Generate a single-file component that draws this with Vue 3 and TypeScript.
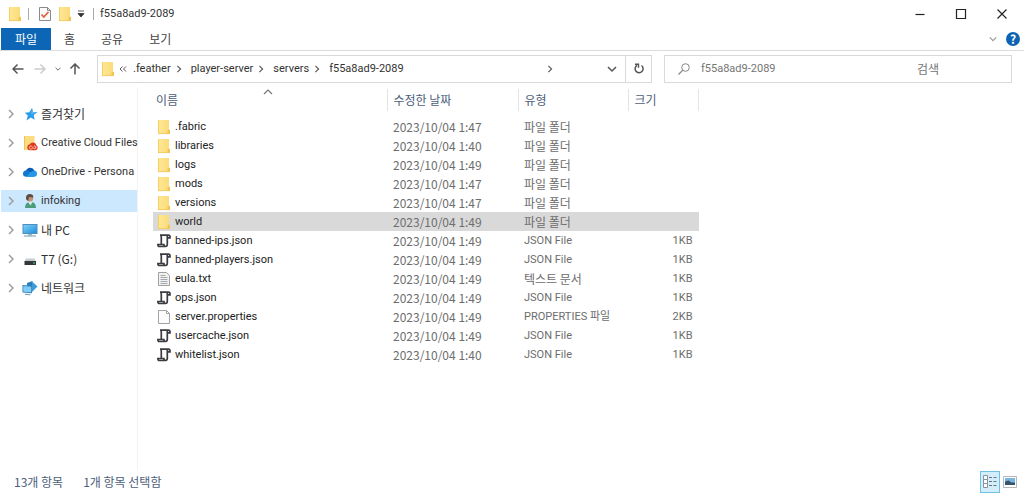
<script setup lang="ts">
import { ref } from 'vue'

type IconKind = 'folder' | 'script' | 'text' | 'blank'

interface FileEntry {
  name: string
  icon: IconKind
  modified: string
  type: string
  size: string
}

interface Place {
  label: string
  icon: string
}

const folderName = 'f55a8ad9-2089'
const tabs: string[] = ['파일', '홈', '공유', '보기']
const crumbs: string[] = ['.feather', 'player-server', 'servers', folderName]

const places: Place[] = [
  { label: '즐겨찾기', icon: 'star' },
  { label: 'Creative Cloud Files', icon: 'creative' },
  { label: 'OneDrive - Persona', icon: 'cloud' },
  { label: 'infoking', icon: 'user' },
  { label: '내 PC', icon: 'pc' },
  { label: 'T7 (G:)', icon: 'drive' },
  { label: '네트워크', icon: 'network' },
]

const folder = (name: string, time: string): FileEntry => ({
  name,
  icon: 'folder',
  modified: `2023/10/04 ${time}`,
  type: '파일 폴더',
  size: '',
})
const file = (name: string, time: string, icon: IconKind = 'script', type = 'JSON File', size = '1KB'): FileEntry => ({
  name,
  icon,
  modified: `2023/10/04 ${time}`,
  type,
  size,
})

const entries: FileEntry[] = [
  folder('.fabric', '1:47'),
  folder('libraries', '1:40'),
  folder('logs', '1:49'),
  folder('mods', '1:47'),
  folder('versions', '1:47'),
  folder('world', '1:49'),
  file('banned-ips.json', '1:49'),
  file('banned-players.json', '1:49'),
  file('eula.txt', '1:49', 'text', '텍스트 문서'),
  file('ops.json', '1:49'),
  file('server.properties', '1:49', 'blank', 'PROPERTIES 파일', '2KB'),
  file('usercache.json', '1:49'),
  file('whitelist.json', '1:40'),
]

const isLatin = (text: string): boolean => /^[A-Za-z.]{2}/.test(text)

const selected = ref('world')
const activePlace = ref('infoking')
const query = ref('')
</script>

<template>
  <div class="explorer">
    <svg class="defs" width="0" height="0" aria-hidden="true">
      <defs>
        <linearGradient id="g-folder" x1="0" y1="0" x2="1" y2="0">
          <stop offset="0" stop-color="#ffe795" />
          <stop offset="1" stop-color="#fbdb78" />
        </linearGradient>
        <linearGradient id="g-screen" x1="0" y1="0" x2="1" y2="1">
          <stop offset="0" stop-color="#7fd0f8" />
          <stop offset="1" stop-color="#1f8fdc" />
        </linearGradient>
        <symbol id="i-folder" viewBox="0 0 14 16">
          <path d="M1 1h11v9.500l1 1V15H1z" fill="url(#g-folder)" />
          <path d="M1 1h1v14H1z" fill="#f6d063" />
          <path d="M10.500 11.500l1.500-1 1 1V15h-2.500z" fill="#f0c653" />
          <path d="M1 14.300h12v.8H1z" fill="#efc85c" />
        </symbol>
        <symbol id="i-script" viewBox="0 0 14 16">
          <path d="M4.300 11V4q0-1.800-1.300-1.800h8.500q1.500 0 1.500 1.800v.8h-2.500M10.300 3v8.300q0 2.200-1.800 2.200H2.300Q.9 13.500.9 11.500h6q0 2 1.600 2" fill="none" stroke="#3b3b40" stroke-width="1.700" />
        </symbol>
        <symbol id="i-text" viewBox="0 0 14 16">
          <path d="M1.500 1.500h8l3 3v10h-11z" fill="#f1f1f1" stroke="#a0a0a0" />
          <path d="M3.500 4.500h5M3.500 6.500h7M3.500 8.500h7M3.500 10.500h7M3.500 12.500h7" stroke="#a6a9ac" />
        </symbol>
        <symbol id="i-blank" viewBox="0 0 14 16">
          <path d="M1.500 1.500h8l3 3v10h-11z" fill="#fdfdfd" stroke="#a3a3a3" />
          <path d="M9.500 1.500v3h3" fill="none" stroke="#a3a3a3" />
        </symbol>
        <symbol id="i-star" viewBox="0 0 16 16">
          <path d="M10 2l1 4 4.500.3-3.800 2.700 1 4.800-3.900-2.400-4.300 3 1.300-4.900-3-2.700 4.500-.6z" fill="#2a9cea" />
          <path d="M10 2l1 4 4.500.3-6.500 2z" fill="#58b8f5" />
        </symbol>
        <symbol id="i-creative" viewBox="0 0 16 16">
          <path d="M2 1h10.500v14H2z" fill="#fbdc80" />
          <path d="M2 1h1v14H2z" fill="#efc455" />
          <path d="M5.200 12.200a3 3 0 0 1 2.500-3 3.700 3.700 0 0 1 6.800 1.400 2.500 2.500 0 0 1-.8 4.600H8a3 3 0 0 1-2.800-3z" fill="#dc3b22" />
          <path d="M10.700 13l-1.200.9a1.500 1.500 0 1 1 0-2.700c1.300.4 1.500 2.700 3.300 2.400a1.300 1.300 0 1 0-1-2.300" fill="none" stroke="#ffd6b5" stroke-width=".9" />
        </symbol>
        <symbol id="i-cloud" viewBox="0 0 16 16">
          <path d="M4 7a4.500 4.500 0 0 1 8.400-.5L9 11z" fill="#0b5cb0" />
          <path d="M3.800 6.500a3.500 3.500 0 0 1 3 .6l5.500 5.700H3.500a3.200 3.200 0 0 1 .3-6.300z" fill="#1277cf" />
          <path d="M7.500 8.500l3-1.500a3.500 3.500 0 0 1 2.200-.4 3.200 3.200 0 0 1 0 6.200H5z" fill="#2396e6" />
        </symbol>
        <symbol id="i-user" viewBox="0 0 16 16">
          <path d="M3 15q0-5 4-6h3q4 .8 4 6z" fill="#4a9c7c" />
          <path d="M6 9l2.500 3.500L10.500 9z" fill="#d9ebe4" />
          <circle cx="8" cy="5.300" r="3.200" fill="#c39273" />
          <path d="M4.200 6.500q-1-5.300 3.300-5.500 4.300-.1 3.700 3.500L7 4l-.8 4z" fill="#5a4d44" />
        </symbol>
        <symbol id="i-pc" viewBox="0 0 16 16">
          <path d="M.5 2h15v10H.5z" fill="#4c8fbd" />
          <path d="M1.500 3h13v8h-13z" fill="url(#g-screen)" />
          <path d="M6 12h4v1.500H6z" fill="#9db8c9" />
          <path d="M2 13.500h12v1H2z" fill="#6d99b5" />
        </symbol>
        <symbol id="i-drive" viewBox="0 0 16 16">
          <path d="M4 7.500h8.500l1.500 3H2.500z" fill="#c9cccf" />
          <path d="M2.500 10h11.500v4H2.500z" fill="#33373a" />
          <path d="M11 11.500h2v1h-2z" fill="#5dd27a" />
        </symbol>
        <symbol id="i-network" viewBox="0 0 16 16">
          <path d="M5 3l5.500-2v9L5 10z" fill="#2b7fbf" />
          <path d="M10 1.500l5.500 5-5.500 5.500z" fill="#3d9bdc" />
          <path d="M.5 5l9.500.8v7.500L.5 12.500z" fill="#3581b5" />
          <path d="M1.300 6l7.900.7v5.600l-7.900-.6z" fill="#7fcdf7" />
          <path d="M3 14.300l5.500.5" stroke="#6f9db9" />
        </symbol>
        <symbol id="i-chevron" viewBox="0 0 10 10">
          <path d="M3 1l4 4-4 4" fill="none" stroke="currentColor" stroke-width="1.400" />
        </symbol>
        <symbol id="i-down" viewBox="0 0 10 10">
          <path d="M1 3l4 4 4-4" fill="none" stroke="currentColor" stroke-width="1.500" />
        </symbol>
        <symbol id="i-arrow" viewBox="0 0 12 12">
          <path d="M11.500 6H1M5.500 1.500L1 6l4.500 4.500" fill="none" stroke="currentColor" stroke-width="1.500" />
        </symbol>
      </defs>
    </svg>

    <header class="titlebar">
      <svg class="ico-file"><use href="#i-folder" /></svg>
      <span class="bar"></span>
      <button class="plain quick" aria-label="속성">
        <svg width="14" height="16" viewBox="0 0 14 16">
          <path d="M1.500 1.500h8l3 3v10h-11z" fill="#fbfbfb" stroke="#8b8b8b" />
          <path d="M9.500 1.500v3h3" fill="none" stroke="#8b8b8b" />
          <path d="M3.500 8.500l2.300 2.500 4.700-5" fill="none" stroke="#e0643c" stroke-width="1.800" />
        </svg>
      </button>
      <button class="plain quick" aria-label="새 폴더"><svg class="ico-file"><use href="#i-folder" /></svg></button>
      <button class="plain more" aria-label="사용자 지정">
        <svg width="8" height="8" viewBox="0 0 8 8"><path d="M1 1h6M1 3.500h6L4 7z" fill="#333" stroke="#333" stroke-width=".8" /></svg>
      </button>
      <span class="bar"></span>
      <h1 class="title latin">{{ folderName }}</h1>
      <div class="window-buttons">
        <button class="plain" aria-label="최소화">
          <svg width="12" height="12" viewBox="0 0 12 12"><path d="M1.500 6.500h9" stroke="#222" stroke-width="1.200" /></svg>
        </button>
        <button class="plain" aria-label="최대화">
          <svg width="12" height="12" viewBox="0 0 12 12"><path d="M1.500 1.500h9v9h-9z" fill="none" stroke="#222" stroke-width="1.200" /></svg>
        </button>
        <button class="plain" aria-label="닫기">
          <svg width="12" height="12" viewBox="0 0 12 12"><path d="M1.500 1.500l9 9M10.500 1.500l-9 9" stroke="#222" stroke-width="1.200" /></svg>
        </button>
      </div>
    </header>

    <nav class="ribbon">
      <button v-for="(tab, i) in tabs" :key="tab" class="tab" :class="{ primary: i === 0 }">{{ tab }}</button>
      <button class="plain expand" aria-label="리본 확장"><svg width="8" height="8"><use href="#i-down" /></svg></button>
      <button class="plain help" aria-label="도움말">?</button>
    </nav>

    <div class="navigation">
      <div class="history">
        <button class="plain" aria-label="뒤로"><svg width="12" height="12"><use href="#i-arrow" /></svg></button>
        <button class="plain faded" aria-label="앞으로"><svg class="flip" width="12" height="12"><use href="#i-arrow" /></svg></button>
        <button class="plain small" aria-label="최근 위치"><svg width="6" height="6"><use href="#i-down" /></svg></button>
        <button class="plain" aria-label="위로"><svg class="up" width="12" height="12"><use href="#i-arrow" /></svg></button>
      </div>
      <div class="address">
        <svg class="ico-file"><use href="#i-folder" /></svg>
        <svg class="double" width="8" height="8" viewBox="0 0 8 8"><path d="M3.500 1.500L1 4l2.500 2.500M7 1.500L4.500 4 7 6.500" fill="none" stroke="#555" /></svg>
        <template v-for="(crumb, i) in crumbs" :key="crumb">
          <svg v-if="i > 0" class="sep" width="8" height="8"><use href="#i-chevron" /></svg>
          <a class="crumb latin" href="#">{{ crumb }}</a>
        </template>
        <svg class="sep tail" width="8" height="8"><use href="#i-chevron" /></svg>
        <button class="plain drop" aria-label="이전 위치"><svg width="10" height="10"><use href="#i-down" /></svg></button>
        <button class="plain refresh" aria-label="새로 고침">
          <svg width="12" height="12" viewBox="0 0 12 12">
            <path d="M8.500 2.500a4 4 0 1 1-4.500-.2" fill="none" stroke="#555" stroke-width="1.500" />
            <path d="M2 1.200h3.500v3.500" fill="none" stroke="#555" stroke-width="1.400" />
          </svg>
        </button>
      </div>
      <form class="search" @submit.prevent>
        <svg width="14" height="14" viewBox="0 0 14 14">
          <circle cx="8.500" cy="5.500" r="3.800" fill="none" stroke="#858585" />
          <path d="M5.800 8.200L1.500 12.500" stroke="#858585" stroke-width="1.200" />
        </svg>
        <input v-model="query" class="latin" type="text" :placeholder="folderName" aria-label="검색어" />
        <button class="plain go" type="submit">검색</button>
      </form>
    </div>

    <main class="body">
      <aside class="sidebar">
        <button
          v-for="place in places"
          :key="place.label"
          class="place"
          :class="{ active: place.label === activePlace }"
          @click="activePlace = place.label"
        >
          <svg class="twisty" width="10" height="10"><use href="#i-chevron" /></svg>
          <svg class="place-icon" width="16" height="16"><use :href="`#i-${place.icon}`" /></svg>
          <span :class="{ latin: isLatin(place.label) }">{{ place.label }}</span>
        </button>
      </aside>

      <section class="listing">
        <table>
          <colgroup>
            <col class="c-name" />
            <col class="c-date" />
            <col class="c-type" />
            <col class="c-size" />
          </colgroup>
          <thead>
            <tr>
              <th scope="col">
                이름
                <svg class="sort" width="10" height="6" viewBox="0 0 10 6"><path d="M1 5l4-4 4 4" fill="none" stroke="#777" stroke-width="1.200" /></svg>
              </th>
              <th scope="col">수정한 날짜</th>
              <th scope="col">유형</th>
              <th scope="col">크기</th>
            </tr>
          </thead>
          <tbody>
            <tr
              v-for="entry in entries"
              :key="entry.name"
              :class="{ selected: entry.name === selected }"
              @click="selected = entry.name"
            >
              <td>
                <div class="name latin">
                  <svg class="ico-file"><use :href="`#i-${entry.icon}`" /></svg>
                  <span>{{ entry.name }}</span>
                </div>
              </td>
              <td>{{ entry.modified }}</td>
              <td :class="{ latin: isLatin(entry.type) }">{{ entry.type }}</td>
              <td class="size latin">{{ entry.size }}</td>
            </tr>
          </tbody>
        </table>
      </section>
    </main>

    <footer class="status">
      <span>{{ entries.length }}개 항목</span>
      <span>1개 항목 선택함</span>
      <div class="views">
        <button class="plain view on" aria-label="자세히">
          <svg width="16" height="16" viewBox="0 0 16 16">
            <path d="M1.500 1.500h4v4h-4zM1.500 5.500h4v4h-4zM1.500 9.500h4v4h-4z" fill="#fff" stroke="#8a9299" />
            <path d="M7 3.500h3M11.500 3.500h3M7 7.500h3M11.500 7.500h3M7 11.500h3M11.500 11.500h3" stroke="#66747e" />
          </svg>
        </button>
        <button class="plain view" aria-label="큰 아이콘">
          <svg width="14" height="12" viewBox="0 0 14 12">
            <path d="M.5.5h13v11H.5z" fill="#fff" stroke="#b4b8bb" />
            <path d="M2 2h10v7H2z" fill="#78b4e0" />
            <path d="M2 5.500l3.500-1 3 2H12V9H2z" fill="#36556b" />
          </svg>
        </button>
      </div>
    </footer>
  </div>
</template>

<style>
body {
  margin: 0;
  background: #fff;
}
</style>

<style scoped>
.explorer {
  display: flex;
  flex-direction: column;
  min-height: 100vh;
  font: 12px/18px "Noto Sans CJK KR", sans-serif;
  color: #333;
  background: #fff;
}

.defs {
  position: absolute;
}

button,
input {
  font: inherit;
  color: inherit;
}

.plain {
  display: flex;
  align-items: center;
  justify-content: center;
  padding: 0;
  border: 0;
  background: none;
}

.explorer .latin {
  font-family: Roboto, "Noto Sans CJK KR", sans-serif;
  font-size: 11px;
}

.ico-file {
  flex: none;
  width: 14px;
  height: 16px;
}

.titlebar {
  display: flex;
  align-items: center;
  height: 28px;
  padding-left: 8px;
}

.bar {
  width: 1px;
  height: 12px;
  margin: 0 6px;
  background: #aaa;
}

.quick {
  width: 20px;
}

.more {
  width: 12px;
}

.title {
  margin: 0;
  font-weight: 400;
}

.window-buttons {
  display: flex;
  margin-left: auto;
  margin-right: 2px;
}

.window-buttons .plain {
  width: 41px;
  height: 28px;
}

.ribbon {
  display: flex;
  align-items: center;
  height: 22px;
  border-bottom: 1px solid #dcdcdc;
}

.tab {
  height: 22px;
  border: 0;
  background: none;
  color: #444;
}

.tab.primary {
  width: 50px;
  margin-left: 1px;
  padding: 0 12px;
  background: #0c66b5;
  color: #fff;
}

.tab + .tab {
  padding: 0 13px;
}

.expand {
  width: 16px;
  margin-left: auto;
  color: #999;
}

.help {
  width: 14px;
  height: 14px;
  margin: 0 4px 0 5px;
  border-radius: 50%;
  background: #0f63b3;
  color: #fff;
  font-weight: 700;
}

.navigation {
  display: flex;
  align-items: center;
  gap: 12px;
  padding: 4px 12px 4px 8px;
}

.history {
  display: flex;
  width: 77px;
  align-items: center;
  justify-content: space-between;
  color: #555;
}

.history .plain {
  width: 20px;
}

.history .small {
  width: 10px;
}

.history .faded {
  color: #ccc;
}

.flip {
  transform: rotate(180deg);
}

.up {
  transform: rotate(90deg);
}

.address,
.search {
  display: flex;
  box-sizing: border-box;
  align-items: center;
  height: 28px;
  border: 1px solid #d9d9d9;
  min-width: 0;
}

.address {
  flex: 550 1 0;
  padding-left: 3px;
}

.double {
  margin: 0 6px 0 4px;
}

.crumb {
  color: #333;
  text-decoration: none;
}

.sep {
  flex: none;
  margin: 0 8px 0 4px;
  color: #555;
}

.tail {
  margin-left: auto;
  margin-right: 48px;
}

.drop {
  width: 20px;
  margin-right: 3px;
  color: #555;
}

.refresh {
  width: 26px;
  height: 26px;
  border-left: 1px solid #d9d9d9;
}

.search {
  flex: 334 1 0;
  padding-left: 12px;
  color: #757575;
}

.search input {
  flex: 1;
  min-width: 0;
  padding: 0 0 0 10px;
  border: 0;
  outline: 0;
  background: none;
}

.search input::placeholder {
  color: #757575;
  opacity: 1;
}

.go {
  margin-right: 72px;
}

.body {
  display: flex;
  flex: 1;
}

.sidebar {
  display: flex;
  flex: none;
  flex-direction: column;
  gap: 7px;
  box-sizing: border-box;
  width: 138px;
  padding: 16px 0 0 1px;
  border-right: 1px solid #f3f3f3;
}

.place {
  display: flex;
  align-items: center;
  height: 22px;
  padding: 0 0 0 5px;
  border: 0;
  background: none;
  color: #333;
  white-space: nowrap;
}

.place.active {
  background: #cce8ff;
}

.twisty {
  flex: none;
  margin-right: 6px;
  color: #999;
}

.place-icon {
  flex: none;
  margin-right: 3px;
}

.place .latin {
  line-height: 20px;
}

.listing {
  flex: 1;
  padding: 2px 0 0 15px;
}

table {
  border-collapse: collapse;
  table-layout: fixed;
  width: 546px;
}

.c-name {
  width: 234px;
}

.c-date {
  width: 131px;
}

.c-type {
  width: 110px;
}

th {
  position: relative;
  height: 22px;
  padding: 0 0 0 6px;
  border-right: 1px solid #e4e4e4;
  color: #4c607a;
  font-weight: 400;
  text-align: left;
}

th:first-child {
  padding-left: 3px;
}

.sort {
  position: absolute;
  top: 0;
  left: 110px;
}

tbody::before {
  display: block;
  height: 6px;
  content: "";
}

td {
  height: 19px;
  padding: 0 0 0 6px;
  color: #6d6d6d;
  line-height: 18px;
  vertical-align: middle;
  white-space: nowrap;
}

td:first-child {
  padding-left: 4px;
  color: #222;
}

.name {
  display: flex;
  align-items: center;
  gap: 4px;
}

.selected td {
  background: #d9d9d9;
}

td.size {
  padding-right: 6px;
  text-align: right;
}

.status {
  display: flex;
  align-items: center;
  gap: 20px;
  height: 23px;
  padding: 0 4px 0 14px;
  color: #4c607a;
}

.views {
  display: flex;
  margin-left: auto;
}

.view {
  box-sizing: border-box;
  width: 20px;
  height: 22px;
}

.view.on {
  border: 1px solid #6fc0e4;
  background: #d3eefa;
}
</style>
